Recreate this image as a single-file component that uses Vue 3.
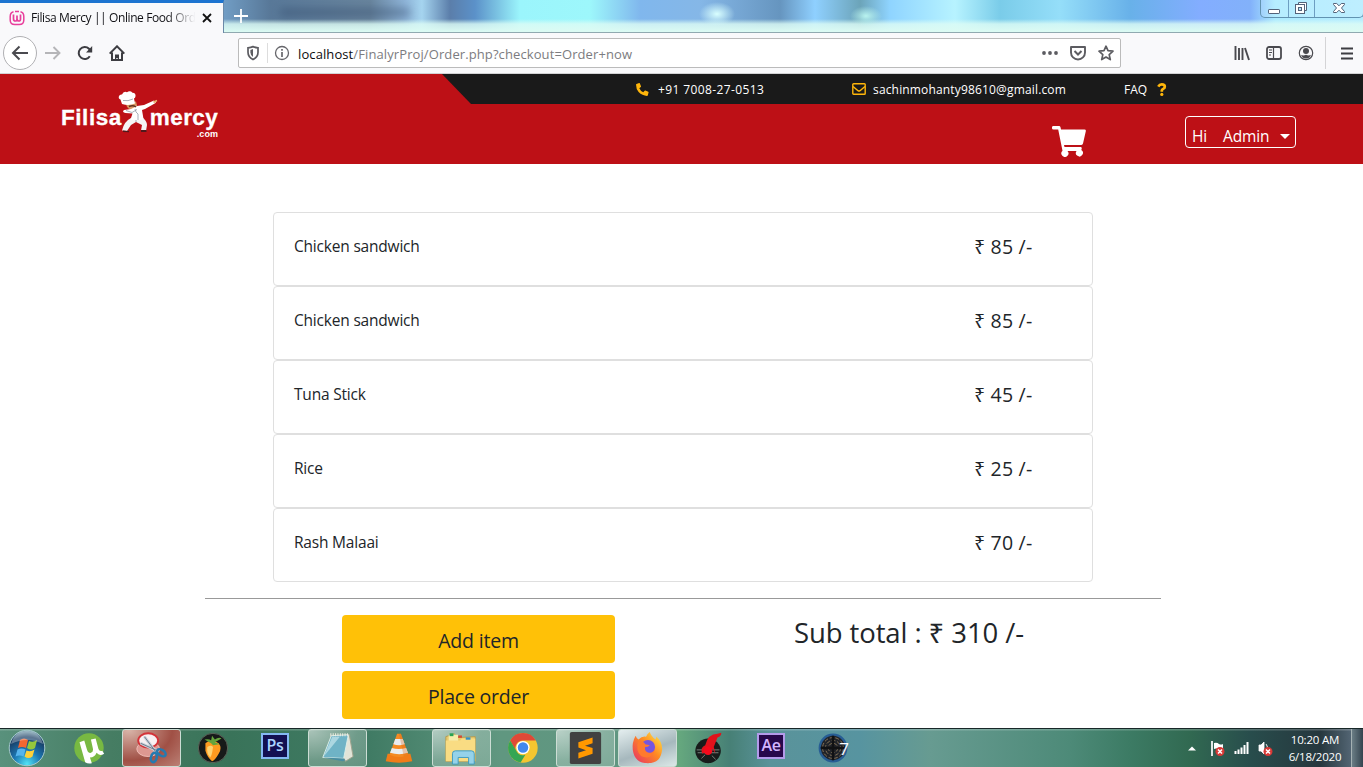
<script setup>
const items = [
  { name: 'Chicken sandwich', price: 85 },
  { name: 'Chicken sandwich', price: 85 },
  { name: 'Tuna Stick', price: 45 },
  { name: 'Rice', price: 25 },
  { name: 'Rash Malaai', price: 70 }
]
const total = items.reduce((sum, item) => sum + item.price, 0)
</script>

<template>
  <div class="screen">
    <div class="titlebar">
      <div class="tab">
        <svg class="fav" viewBox="0 0 16 16"><path d="M4.500 1.700Q1.200 2.500 1.200 6.500V10q0 4.600 4.600 4.600h4.400q4.600 0 4.600-4.600V6.500q0-4-3.300-4.800M6 1.400h4" fill="none" stroke="#e83e9b" stroke-width="1.500"/><path d="M4.500 4.500v4.200q0 2.300 1.800 2.300T8 8.700V5.500v3.200q0 2.300 1.800 2.300t1.700-2.300V4.500" fill="none" stroke="#e83e9b" stroke-width="1.700"/></svg>
        <span class="tab-title">Filisa Mercy || Online Food Order</span>
        <svg class="close" viewBox="0 0 10 10"><path d="M1 1l8 8M9 1L1 9" stroke="#111" stroke-width="1.800"/></svg>
      </div>
      <svg class="plus" viewBox="0 0 14 14"><path d="M7 0v14M0 7h14" stroke="#fff" stroke-width="1.800"/></svg>
      <div class="ghost-text"></div>
      <div class="window-buttons">
        <span><svg width="14" height="14" viewBox="0 0 14 14"><rect x="1.500" y="7.500" width="11" height="4" rx=".6" fill="#fff" stroke="#536279"/></svg></span>
        <span><svg width="14" height="14" viewBox="0 0 14 14"><path d="M4.500 3.500v-2h8v8h-2" fill="#fff" stroke="#536279"/><rect x="1.500" y="3.500" width="9" height="9" fill="#fff" stroke="#536279"/><rect x="4.500" y="6.500" width="3" height="3" fill="#b9e4f8" stroke="#536279"/></svg></span>
        <span><svg width="14" height="14" viewBox="0 0 14 14"><path d="M1.500 2.500h3.200L7 4.800l2.300-2.300h3.200v1L9.500 7l3 3.500v1H9.300L7 9.200l-2.300 2.300H1.500v-1l3-3.500-3-3.500z" fill="#fff" stroke="#536279"/></svg></span>
      </div>
    </div>

    <div class="toolbar">
      <div class="nav">
        <span class="back"><svg width="18" height="18" viewBox="0 0 18 18"><path d="M17 9H2M8.500 2.500L2 9l6.500 6.500" fill="none" stroke="#4a4a4f" stroke-width="2"/></svg></span>
        <svg width="16" height="16" viewBox="0 0 16 16"><path d="M0 8h14M8.500 2l6 6-6 6" fill="none" stroke="#b5b5b8" stroke-width="1.900"/></svg>
        <svg width="16" height="16" viewBox="0 0 16 16"><path d="M12.800 11.200A6 6 0 1 1 12 3.800L14 6" fill="none" stroke="#3d3d42" stroke-width="2"/><path d="M15.200 1v6.500H9z" fill="#3d3d42"/></svg>
        <svg width="16" height="16" viewBox="0 0 16 16"><path d="M.7 8.600L8 1.300l7.300 7.300M3 7.500V15h10V7.500" fill="none" stroke="#3d3d42" stroke-width="2"/><path d="M6 15V9.500h4V15H8.700v-2H7.300v2z" fill="#3d3d42"/></svg>
      </div>
      <div class="address">
        <svg width="14" height="16" viewBox="0 0 14 16"><path d="M2 2.800Q5 2.500 7 1.600q2 .9 5 1.200v4.400Q12 12 7 14.500 2 12 2 7.200z" fill="none" stroke="#5c5c61" stroke-width="1.700"/><path d="M7 4v8Q4.400 10 4.400 7.200V5Z" fill="#5c5c61"/></svg>
        <i class="address-rule"></i>
        <svg class="info" width="16" height="16" viewBox="0 0 16 16"><circle cx="8" cy="8" r="6.500" fill="none" stroke="#66666b" stroke-width="1.300"/><path d="M8 7v5M8 4v1.800" stroke="#66666b" stroke-width="1.700"/></svg>
        <span class="url"><b>localhost</b>/FinalyrProj/Order.php?checkout=Order+now</span>
        <svg class="dots" width="16" height="6" viewBox="0 0 16 6"><g fill="#5c5c61"><circle cx="2" cy="3" r="1.900"/><circle cx="8" cy="3" r="1.900"/><circle cx="14" cy="3" r="1.900"/></g></svg>
        <svg class="pocket" width="16" height="16" viewBox="0 0 16 16"><path d="M1 2h14v5.500a7 7 0 0 1-14 0z" fill="none" stroke="#5c5c61" stroke-width="1.900" stroke-linejoin="round"/><path d="M4.500 6L8 9.500 11.500 6" fill="none" stroke="#5c5c61" stroke-width="2"/></svg>
        <svg class="star" width="16" height="16" viewBox="0 0 16 16"><path d="M8 1.200l2 4.500 5 .5-3.800 3.400 1.100 5L8 12l-4.300 2.600 1.100-5L1 6.200l5-.5z" fill="none" stroke="#5c5c61" stroke-width="1.700" stroke-linejoin="round"/></svg>
      </div>
      <div class="tools">
        <svg width="16" height="16" viewBox="0 0 16 16"><path d="M1.500 1v14M5 3v12M8.500 3v12M11 3l4 12" stroke="#4a4a4f" stroke-width="1.900"/></svg>
        <svg width="16" height="16" viewBox="0 0 16 16"><rect x="1" y="2" width="14" height="12" rx="2" fill="none" stroke="#4a4a4f" stroke-width="1.800"/><path d="M7.500 2v12M3 5h3M3 7.500h3M3 10h2" stroke="#4a4a4f" stroke-width="1.200"/></svg>
        <svg width="16" height="16" viewBox="0 0 16 16"><circle cx="8" cy="8" r="6.700" fill="none" stroke="#4a4a4f" stroke-width="1.200"/><circle cx="8" cy="6" r="3" fill="#4a4a4f"/><path d="M3 10q2.500 1 5-.2Q10.500 11 13 10q-1.500 3.500-5 3.500T3 10" fill="#4a4a4f"/></svg>
        <i class="tool-rule"></i>
        <svg width="14" height="14" viewBox="0 0 14 14"><path d="M1 2.500h12M1 7.500h12M1 12.500h12" stroke="#3d3d42" stroke-width="1.800"/></svg>
      </div>
    </div>

    <header class="header">
      <div class="contacts">
        <span class="phone"><svg width="13" height="13" viewBox="0 0 512 512"><path fill="#ffb60b" d="M18 38L122 1q18-3 27 13l48 112q5 17-9 28l-58 48q50 111 155 164l56-60q12-12 28-6l113 49q15 9 13 26l-30 108q-7 21-25 25Q255 512 103 358 0 245 2 62q3-17 16-24"/></svg><span>+91 7008-27-0513</span></span>
        <span class="mail"><svg width="14" height="12" viewBox="0 0 14 12"><rect x=".8" y=".8" width="12.400" height="10.400" rx=".8" fill="none" stroke="#ffb60b" stroke-width="1.400"/><path d="M1 3.500l5 4.200q1 .7 2 0l5-4.200" fill="none" stroke="#ffb60b" stroke-width="1.500"/></svg><span>sachinmohanty98610@gmail.com</span></span>
        <span class="faq"><span>FAQ</span><svg width="10" height="13" viewBox="0 0 10 13"><path d="M1.300 3.600Q2.500 1.400 4.800 1.400q3 0 3 2.300 0 1.400-1.600 2.200-1.400.8-1.400 1.600V8.700" fill="none" stroke="#ffb60b" stroke-width="2.700"/><circle cx="4.800" cy="11.400" r="1.600" fill="#ffb60b"/></svg></span>
      </div>
      <div class="brand">
        <span class="brand-left">Filisa</span>
        <svg class="chef" width="40" height="44" viewBox="0 0 40 44">
          <path d="M13 28l11-1q5 4 5 8l-1 6-5-.5 1-5.500-6-3-5 3-4 6-5-.5q2-9 9-12.500z" fill="#f5f5f5"/>
          <path d="M5 40.500l6 .5v1.200l-6-.3zM23 40h5.500v2H23z" fill="#4f191c"/>
          <path d="M8 12.500l10-1 1 4q-2 4-6 4-5-1-5-7" fill="#d99662"/>
          <path d="M6 20l7-1 6-3 7-1 10-4.500 2 2.200L27 19l-3 1 1.500 9q-6 2.500-13 .500l2-6-7-.500q-4-1-1.500-3" fill="#fff"/>
          <path d="M11 16.500q4-1.500 7 .5" stroke="#5f3320" stroke-width="1.500" fill="none"/>
          <path d="M4 14L2.500 9.500Q0 8.500 1 6q1-2 3-1.500Q5.500.8 9 2.200q3-2.200 5.500.5 3.500.3 3 3.600-.2 1.700-1.500 2.200l1 5q-6 2.500-13 .500" fill="#fff"/>
          <path d="M5 10.500q5 1 10-1.500M17 19l1 3 2 2v6M8 20.500l6 2 5-3M18 30v2" stroke="#929ba6" stroke-width=".8" fill="none"/>
          <path d="M35 11.500l3.800-1.700.5 1.400-3.300 2z" fill="#e5b16f"/>
        </svg>
        <span class="brand-right"><span>mercy</span><small>.com</small></span>
      </div>
      <div class="header-actions">
        <svg class="cart" width="34" height="31" viewBox="0 0 34 31"><path fill="#fff" d="M1.500 0H7q1.200 0 1.500 1.200L9 3.600h23.500q1.700 0 1.300 1.700L31 17.600q-.3 1.300-1.700 1.300H12l.5 2.200h16q1.500 0 1.200 1.600l-.4 1.300A3.500 3.500 0 1 1 24.500 25h-9a3.500 3.500 0 1 1-5-.200L6.200 3.600H1.500Q0 3.600 0 2.300V1.200Q0 0 1.500 0"/></svg>
        <button class="user"><span>Hi</span><span>Admin</span><i></i></button>
      </div>
    </header>

    <main class="page">
      <ul class="items">
        <li v-for="(item, index) in items" :key="index"><span class="name">{{ item.name }}</span><span class="price">₹ {{ item.price }} /-</span></li>
      </ul>
      <div class="summary">
        <div class="buttons"><button>Add item</button><button class="place">Place order</button></div>
        <div class="total">Sub total : ₹ {{ total }} /-</div>
      </div>
    </main>

    <footer class="taskbar">
      <div class="slot start"><svg viewBox="0 0 38 38">
        <defs><radialGradient id="orb" cx=".5" cy=".95" r=".95"><stop offset="0" stop-color="#52e4f5"/><stop offset=".4" stop-color="#1c78b4"/><stop offset=".8" stop-color="#183b62"/><stop offset="1" stop-color="#85adba"/></radialGradient></defs>
        <circle cx="19" cy="19" r="17.800" fill="url(#orb)" stroke="#a5c8cb"/>
        <path d="M12 11q4-3 8 0l-2 8q-4-2-8 0z" fill="#f26631"/><path d="M21 12q4 2 8-1l-2 8q-4 3-8 0z" fill="#94c73c"/><path d="M9.500 20.500q4-2 8 0l-2 7q-4-2-8 0z" fill="#56b4ed"/><path d="M18.500 21.500q4 2 8-1l-2 7q-4 3-8 0z" fill="#ffd039"/>
        <path d="M3 15Q7 2 19 2t16 13Q19 7 3 15" fill="#fff" opacity=".3"/></svg></div>
      <div class="slot"><svg viewBox="0 0 38 38"><circle cx="19" cy="19" r="15.500" fill="#78b942"/><path d="M9 13l5-2 3 10q1 4 4 3t2-5l-2-9 5-1 3 11q1 3 4 2l2 3q-5 3-8-1-2 5-7 5l2 6q-4 1-7-1z" fill="#fff"/></svg></div>
      <div class="slot"><div class="frame red"><svg viewBox="0 0 38 38"><ellipse cx="16" cy="20" rx="12" ry="8" fill="#dd9891" stroke="#efbbb5"/><ellipse cx="16" cy="11" rx="10.500" ry="7.500" fill="#f7f0f2" stroke="#d43339" stroke-width="2"/><path d="M12 7l12 16M8 14l18 8" stroke="#c7d0d9" stroke-width="3"/><path d="M12 7l12 16M8 14l18 8" stroke="#6a7787"/><ellipse cx="22" cy="29" rx="3" ry="5" transform="rotate(15 22 29)" fill="none" stroke="#257ab0" stroke-width="2.700"/><ellipse cx="30" cy="24" rx="3" ry="5" transform="rotate(-55 30 24)" fill="none" stroke="#257ab0" stroke-width="2.700"/></svg></div></div>
      <div class="slot"><svg viewBox="0 0 38 38"><circle cx="19" cy="19" r="15.500" fill="#171a19" stroke="#5f685d"/><path d="M11 14q6-6 14 0 4 5 0 11-4 7-7 8-5-4-7-11z" fill="#ff9b20"/><path d="M13 18q4-3 6 0-1 9-3 11-4-4-3-11" fill="#ffd372"/><path d="M17 14l-7-4q5-1 7 1l1-5 3 4q4-3 7-1l-7 4 5 2-7 1z" fill="#65a43d"/></svg></div>
      <div class="slot adobe ps"><b>Ps</b></div>
      <div class="slot"><div class="frame"><svg viewBox="0 0 38 38"><path d="M12 6l20-1 4 23-8 5z" fill="#e2e4d8" stroke="#a3a48f"/><path d="M13 6l18-1-5 25-22-1z" fill="#6fb3c6" stroke="#dcefea"/><path d="M14 7h8L5 28z" fill="#c6e7ed" opacity=".7"/><path d="M12 5h19" stroke="#efefe4" stroke-width="3" stroke-dasharray="1 1.500"/><path d="M4 29l22 1 2 2-3 1z" fill="#498da2"/></svg></div></div>
      <div class="slot"><svg viewBox="0 0 38 38"><path d="M7 25h24l2 8q-14 3-28 0z" fill="#f17c18"/><path d="M17 4h4l8 22q-10 5-20 0z" fill="#f48b23"/><path d="M15 9.500h8l2 5.500q-6 2-12 0zM11.500 19q7 2 15 0l2 5q-9 3-19 0z" fill="#e9edf0"/><path d="M19 4h2l8 22-5 2z" fill="#d66313" opacity=".3"/></svg></div>
      <div class="slot"><div class="frame"><svg viewBox="0 0 38 38"><path d="M3 7l9-3 3 4 19-1v26H3z" fill="#eacb6c" stroke="#b49c50"/><path d="M6 5h10v25H6z" fill="#f5edac"/><path d="M3 11h15l2-2h14v24H3z" fill="#f9dc83"/><path d="M7 5h4" stroke="#27a352" stroke-width="3"/><path d="M16 7h4" stroke="#d84a31" stroke-width="2.500"/><path d="M24 9h5" stroke="#3292c7" stroke-width="2.500"/><path d="M10 36V25q0-3 3-3h17q3 0 3 3v11h-6v-7H16v7z" fill="#95d2e9" stroke="#409abe"/></svg></div></div>
      <div class="slot"><svg viewBox="0 0 38 38"><circle cx="19" cy="19" r="15.500" fill="#f4c630"/><path d="M5.500 11a15.500 15.500 0 0 1 27 0H19a8 8 0 0 0-7 12z" fill="#df4938"/><path d="M5.500 11l7 12q3 5 9 3l-5 8.300A15.500 15.500 0 0 1 5.500 11" fill="#35a653"/><circle cx="19" cy="18.500" r="7" fill="#fff"/><circle cx="19" cy="18.500" r="5.500" fill="#4288ef"/></svg></div>
      <div class="slot"><div class="frame"><svg viewBox="0 0 38 38"><rect x="3" y="2" width="33" height="34" rx="2" fill="#414141"/><path d="M12 13l15-5v6l-8 2.500 8 2.500v6L12 30v-6l8-2.500-8-3z" fill="#ff9800"/></svg></div></div>
      <div class="slot"><div class="frame active"><svg viewBox="0 0 38 38"><defs><linearGradient id="fox" x1="1" x2="0" y2="1"><stop offset="0" stop-color="#fff14a"/><stop offset=".45" stop-color="#ff8b23"/><stop offset="1" stop-color="#e62c68"/></linearGradient></defs><path d="M7 6q1 3 3 4 4-4 8-3 1-3 4-5 1 4 6 8l1-3q6 5 6 13-1 15-15 15T4 21Q3 13 7 6" fill="url(#fox)"/><circle cx="20" cy="18" r="7.500" fill="#7655df"/><path d="M10 12q6 0 7 3l5 1q-2 2-5 2-1 5 4 6 4 0 6-3-1 7-8 8-8 0-10-8-1-5 1-9" fill="#ff7a2e"/></svg></div></div>
      <div class="slot"><svg viewBox="0 0 38 38"><ellipse cx="18" cy="22" rx="13.500" ry="13" fill="#181c1b"/><path d="M6 21h24M7 24h22M11 30l4-4M22 27l4 4" stroke="#7b8781"/><path d="M15 16Q18 4 28 4l4-1q0 4-4 5l-4 10 2 7-3-5-5 1-6 4q-3-6 3-9" fill="#e2121b"/><circle cx="18" cy="22" r="4.500" fill="#f50a1c"/></svg></div>
      <div class="slot adobe ae"><b>Ae</b></div>
      <div class="slot"><div class="seven"><svg viewBox="0 0 38 38"><circle cx="19" cy="19" r="14" fill="#202329" stroke="#275d94" stroke-width="2.400"/><g fill="none" stroke="#8a7659" stroke-dasharray="4 2"><circle cx="19" cy="19" r="11"/><circle cx="19" cy="19" r="8"/><circle cx="19" cy="19" r="5"/></g><path d="M19 6v26M6 19h26" stroke="#101113" stroke-width="2.500"/></svg><b>7</b></div></div>
      <div class="tray">
        <svg class="up" width="8" height="5" viewBox="0 0 8 5"><path d="M0 4.500h8L4 .5z" fill="#fff"/></svg>
        <svg width="16" height="17" viewBox="0 0 16 17"><path d="M2 1v15" stroke="#fff" stroke-width="1.700"/><path d="M4 3q3-1 5 1 2 1 4 0v6q-3 1-5-1-2-1-4 0z" fill="#fff"/><circle cx="10" cy="11.500" r="4.500" fill="#d83936"/><path d="M8 9.500l4 4M12 9.500l-4 4" stroke="#fff" stroke-width="1.500"/></svg>
        <svg class="signal" width="16" height="14" viewBox="0 0 16 14"><path d="M1.500 10v3M4.500 8.500V13M7.500 6.500V13M10.500 4v9M13.500 1v12" stroke="#fff" stroke-width="2"/></svg>
        <svg width="16" height="17" viewBox="0 0 16 17"><path d="M1 5h2L6 2v12L3 11H1zM8 4q1.500 2 1.500 4" fill="#fff" stroke="#fff" stroke-width=".8"/><circle cx="10" cy="11.500" r="4.500" fill="#d83936"/><path d="M8 9.500l4 4M12 9.500l-4 4" stroke="#fff" stroke-width="1.500"/></svg>
        <div class="clock"><span>10:20 AM</span><span>6/18/2020</span></div>
        <i class="peek"></i>
      </div>
    </footer>
  </div>
</template>

<style scoped>
* { box-sizing: border-box; }
.screen { width: 1363px; height: 767px; overflow: hidden; display: flex; flex-direction: column; background: #fff; color: #212529; font-family: "Open Sans", "Noto Sans", sans-serif; }
svg { flex: none; display: block; }
button { font-family: inherit; }
.titlebar { height: 33px; flex: none; display: flex; background: radial-gradient(ellipse 18px 12px at 717px 14px, #d9ffff, transparent), radial-gradient(ellipse 16px 10px at 866px 16px, #b9f3ef, transparent), linear-gradient(transparent 19px, #ddfcf5d0 24px, #dcfbf3 32px, #90a9b0 32px), linear-gradient(90deg, #73a0c8 220px, #587898 270px, #68849d 370px, #8eb4d8 405px, #a5d4ef 422px, #5b7eaa 450px, #5b91c9 475px, #9bf5fc 520px, #9df7fb 590px, #80b7ed 640px, #85b7e7 700px, #6695bf 780px, #8fd0ff 815px, #6ca4b9 860px, #8fd4ff 890px, #b7f3ff 955px, #7acce9 1000px, #95def9 1060px, #68b1e9 1130px, #83adff 1200px, #82b1fa 1250px, #acebff 1275px, #b5ecff); }
.tab { width: 224px; height: 33px; background: #f9f9fb; border-top: 3px solid #1d74d0; border-right: 1px solid #6b89a8; display: flex; align-items: center; padding-left: 9px; }
.fav { width: 16px; height: 16px; margin-right: 6px; }
.tab-title { width: 166px; height: 20px; line-height: 20px; overflow: hidden; white-space: nowrap; font-size: 12px; letter-spacing: -.4px; color: #101014; mask-image: linear-gradient(90deg, #000 82%, transparent 99%); }
.close { width: 10px; height: 10px; margin-left: 5px; }
.plus { width: 14px; height: 14px; margin: 9px 0 0 10px; }
.ghost-text { margin: 8px 0 0 32px; width: 130px; height: 9px; background: #2e4668; opacity: .4; filter: blur(4px); }
.window-buttons { margin-left: auto; margin-right: -1px; width: 104px; height: 18px; display: flex; border: 1px solid #6293b1; border-top: 0; border-radius: 0 0 5px 5px; background: #ffffff20; }
.window-buttons span { width: 28px; border-right: 1px solid #6d9ec2; display: flex; align-items: center; justify-content: center; }
.window-buttons span:nth-child(2) { width: 27px; padding-right: 2px; padding-bottom: 2px; }
.window-buttons span:last-child { width: 48px; border: 0; padding-bottom: 1px; }
.toolbar { height: 41px; flex: none; display: flex; align-items: center; background: #f9f9fb; border-bottom: 1px solid #d2d2d4; }
.nav { width: 238px; display: flex; gap: 16px; align-items: center; padding-left: 3px; }
.nav > svg:first-of-type { margin-left: -8px; }
.back { width: 34px; height: 34px; border: 1px solid #b0b0b3; border-radius: 50%; background: #fff; display: flex; align-items: center; justify-content: center; }
.address { width: 883px; height: 30px; border: 1px solid #bbb; border-radius: 2px; background: #fff; display: flex; align-items: center; padding: 0 6px 0 7px; }
.address-rule { width: 1px; height: 20px; background: #ddd; margin: 0 6px 0 7px; }
.url { margin: 2px 0 0 8px; white-space: nowrap; font-size: 13px; letter-spacing: .1px; color: #7c7c80; }
.url b { font-weight: 400; color: #0c0c0d; }
.dots { margin-left: auto; }
.pocket { margin-left: 12px; }
.star { margin-left: 12px; }
.tools { display: flex; align-items: center; gap: 16px; padding-left: 113px; }
.tool-rule { width: 1px; height: 32px; background: #d4d4d6; margin: 0 -2px 0 -5px; }
.header { height: 90px; flex: none; display: grid; grid-template: 30px 60px / 442px 1fr; background: #bd1016; }
.brand { grid-area: 1 / 1 / 3 / 2; display: flex; align-items: flex-start; padding: 16px 0 0 61px; color: #fff; font: 700 22.500px/28px "Liberation Sans", sans-serif; }
.brand-left { letter-spacing: .55px; margin-top: 14px; -webkit-text-stroke: .3px #fff; }
.chef { margin: 0 -8px 0 -4px; }
.brand-right { margin-top: 14px; display: flex; flex-direction: column; align-items: flex-end; letter-spacing: .4px; -webkit-text-stroke: .3px #fff; }
.brand small { font-size: 9px; line-height: 9px; margin-top: -2px; letter-spacing: .1px; -webkit-text-stroke: 0; }
.contacts { grid-area: 1 / 2; display: flex; align-items: center; background: #1a1a1a; color: #fff; font-size: 12px; clip-path: polygon(0 0, 100% 0, 100% 100%, 29px 100%); }
.contacts > span { display: flex; align-items: center; white-space: nowrap; }
.phone { width: 216px; margin-left: 194px; gap: 9px; letter-spacing: .38px; }
.mail { width: 272px; gap: 7px; letter-spacing: .16px; }
.faq { gap: 10px; }
.header-actions { grid-area: 2 / 2; display: flex; }
.cart { margin: 22px 0 0 610px; }
.user { margin: 12px 0 0 99px; width: 111px; height: 32px; border: 1px solid #fff; border-radius: 4px; padding: 8px 5px 0 6px; background: transparent; color: #fff; display: flex; align-items: center; font-size: 15.500px; letter-spacing: -.15px; }
.user span + span { margin-left: 16px; }
.user i { margin-left: auto; border: 5px solid transparent; border-top-color: #fff; border-bottom: 0; }
.page { flex: none; height: 564px; padding: 48px 202px 0 205px; }
.items { list-style: none; margin: 0 68px; padding: 0; }
.items li { height: 74px; width: 820px; border: 1px solid #dfdfdf; border-radius: 4px; padding: 0 59px 4px 20px; display: flex; justify-content: space-between; align-items: center; }
.name { font-size: 15.500px; letter-spacing: -.2px; margin-bottom: 2px; }
.price { font-size: 19.500px; letter-spacing: .2px; width: 59px; white-space: nowrap; margin-bottom: 2px; }
.summary { margin-top: 16px; border-top: 1px solid #999; padding: 16px 0 0 137px; display: flex; }
.buttons { width: 273px; display: flex; flex-direction: column; gap: 8px; }
.buttons button { height: 48px; padding: 2px 0 0; border: 0; border-radius: 4px; background: #ffc107; color: #212529; font-size: 19.500px; letter-spacing: -.2px; }
.total { margin-left: 179px; font-size: 27.500px; letter-spacing: -.1px; line-height: 36px; white-space: nowrap; }
.taskbar { height: 39px; flex: none; border-top: 1px solid #182728; background: linear-gradient(#ffffff35 0 1px, transparent 2px), linear-gradient(90deg, #59917c, #467d63 110px, #397359 230px, #407b64 370px, #609780 500px, #609681 620px, #65a77e 680px, #478076 730px, #5a939a 770px, #5794a0 860px, #679b91 930px, #4d8a78 1070px, #3c7b64 1130px, #316951 1190px, #284d4c 1250px, #26373e 1320px, #516371 1350px); display: flex; align-items: center; }
.slot { width: 62px; height: 38px; flex: none; display: flex; align-items: center; justify-content: center; }
.slot > svg, .frame svg, .seven svg { width: 36px; height: 36px; }
.seven { position: relative; }
.seven b { position: absolute; right: 2px; top: 9px; color: #fff; font: 400 17px/20px "Open Sans", sans-serif; }
.start { width: 58px; padding-right: 4px; }
.start svg { width: 38px; height: 38px; }
.frame { width: 59px; height: 38px; border: 1px solid #ccddd4; border-radius: 3px; background: radial-gradient(at 0 0, #ffffff90, #ffffff40 60%, #ffffff30); display: grid; place-items: center; }
.frame.red { background: radial-gradient(at 10% 0, #d9b5a9, #a05045 60%, #bb8176); }
.frame.active { background: linear-gradient(160deg, #e4eeef, #a6b8bd 55%, #dbe8e7); }
.adobe b { width: 28px; height: 26px; margin-bottom: 5px; border: 2px solid #84b8f3; background: #131052; color: #acd5ff; font: 600 16px/21px "Open Sans", sans-serif; text-align: center; letter-spacing: -.3px; }
.adobe.ae b { border-color: #b39bea; background: #27084b; color: #d3b5ff; }
.tray { margin-left: auto; width: 175px; height: 38px; display: flex; align-items: center; color: #fff; }
.tray svg { margin-right: 8px; }
.tray svg.up { margin-right: 14px; }
.tray .signal { margin-top: -1px; }
.clock { display: flex; flex-direction: column; width: 66px; text-align: center; font-size: 11.500px; line-height: 17px; white-space: nowrap; letter-spacing: -.2px; }
.peek { margin-left: auto; height: 38px; width: 12px; border-left: 1px solid #a4b1b3; background: linear-gradient(90deg, #6a7d85, #34444f); flex: none; }
</style>

<style>
html, body { margin: 0; overflow: hidden; background: #fff; }
</style>
